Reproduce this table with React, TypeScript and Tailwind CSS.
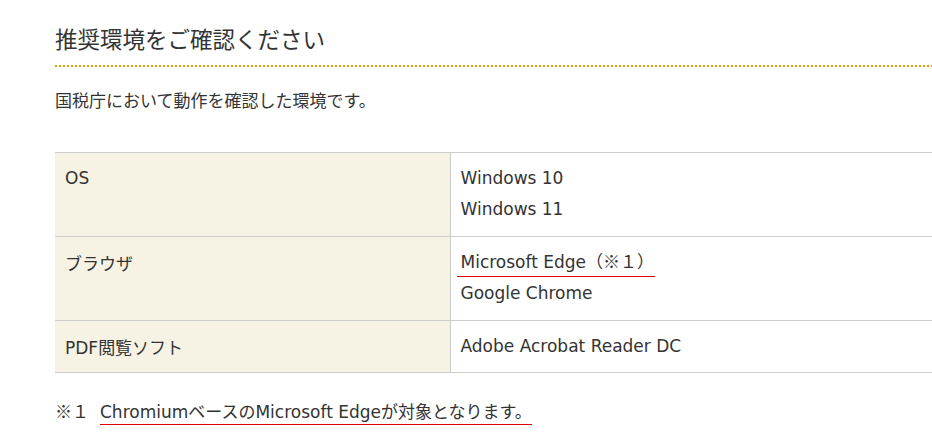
export default function App() {
  const font = { fontFamily: '"DejaVu Sans", "Noto Sans CJK JP", sans-serif' };
  const cjk = "font-['Noto_Sans_CJK_JP',sans-serif]";
  return (
    <div className="w-[932px] h-[447px] bg-white text-[#333] overflow-hidden" style={font}>
      <div className="pl-[55px] pt-[22px]">
        <h1 className={`text-[22.5px] leading-[32px] font-normal text-[#333] pb-[11px] ${cjk}`}>推奨環境をご確認ください</h1>
        <div className="h-[2px] bg-[linear-gradient(to_right,#e89a00_50%,transparent_50%)] bg-[length:4px_2px]" />
        <p className={`text-[17px] leading-[24px] mt-[21px] ${cjk}`}>国税庁において動作を確認した環境です。</p>
        <table className="mt-[40px] w-[877px] border-collapse text-[17px] leading-[31px]">
          <tbody>
            <tr className="border-t border-b border-[#cccccc]">
              <th className="w-[395px] bg-[#f7f3e4] border-r border-[#cccccc] font-normal text-left align-top pl-[10px] pt-[10px] pb-[11px]">OS</th>
              <td className="align-top pl-[10px] pt-[10px] pb-[11px]">
                <div>Windows 10</div>
                <div>Windows 11</div>
              </td>
            </tr>
            <tr className="border-b border-[#cccccc]">
              <th className={`bg-[#f7f3e4] border-r border-[#cccccc] font-normal text-left align-top pl-[10px] pt-[10px] pb-[11px] ${cjk}`}>ブラウザ</th>
              <td className="align-top pl-[10px] pt-[10px] pb-[11px]">
                <div>
                  <a className="inline-block leading-[28px] pl-[4px] -ml-[4px] pr-[1px] border-b border-[#e00000]">
                    Microsoft Edge<span className={cjk}>（※１）</span>
                  </a>
                </div>
                <div>Google Chrome</div>
              </td>
            </tr>
            <tr className="border-b border-[#cccccc]">
              <th className="bg-[#f7f3e4] border-r border-[#cccccc] font-normal text-left align-top pl-[10px] pt-[10px] pb-[8px]">
                PDF<span className={cjk}>閲覧ソフト</span>
              </th>
              <td className="align-top pl-[10px] pt-[10px] pb-[8px]">Adobe Acrobat Reader DC</td>
            </tr>
          </tbody>
        </table>
        <div className="text-[17px] leading-[24px] mt-[26px] flex">
          <span className={`w-[45px] ${cjk}`}>※１</span>
          <span className="inline-block border-b border-[#e00000] leading-[24px]">
            Chromium<span className={cjk}>ベースの</span>Microsoft Edge<span className={cjk}>が対象となります。</span>
          </span>
        </div>
      </div>
    </div>
  );
}
